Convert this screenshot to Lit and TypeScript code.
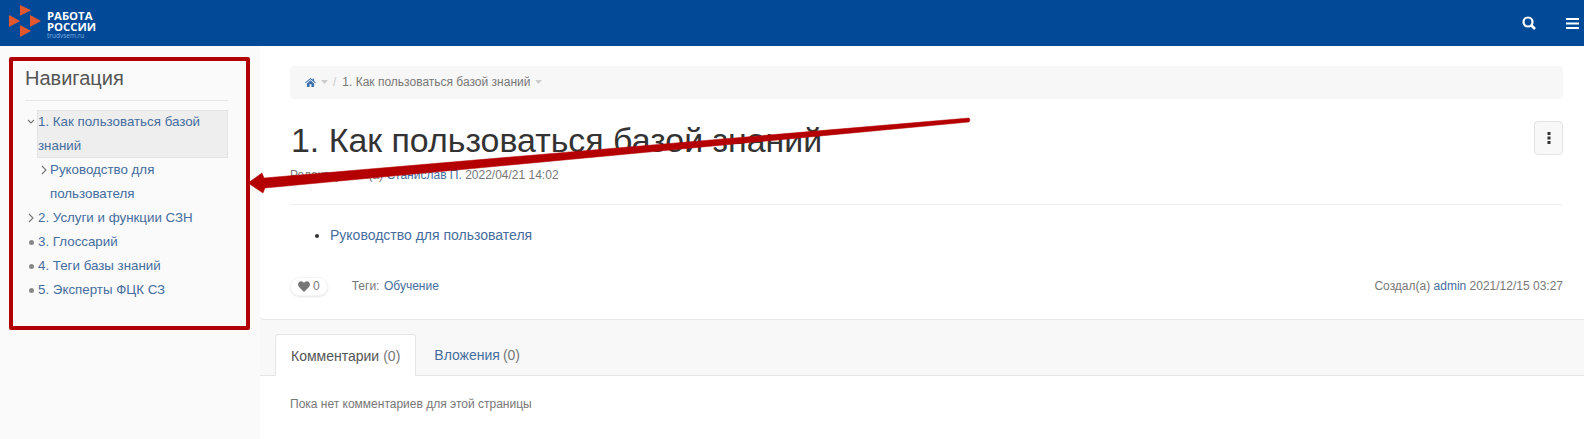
import { LitElement, html, css, svg } from "lit";
import { customElement } from "lit/decorators.js";

const chevRight = svg`<svg class="tw" width="6" height="10" viewBox="0 0 6 10"><path d="M1 1l4 4-4 4" fill="none" stroke="#777" stroke-width="1.1"/></svg>`;
const chevDown = svg`<svg class="tw" width="8" height="6" viewBox="0 0 8 6"><path d="M1 1l3 3 3-3" fill="none" stroke="#777" stroke-width="1.1"/></svg>`;
const caret = svg`<svg class="caret" width="7" height="4" viewBox="0 0 7 4"><path d="M0 0h7L3.500 4z" fill="#ccc"/></svg>`;

@customElement("app-root")
export class AppRoot extends LitElement {
  static styles = css`
    :host { display: block; width: 1584px; height: 439px; overflow: hidden; position: relative; background: #f8f8f8;
      font-family: "Liberation Sans", Arial, sans-serif; font-size: 12px; color: #777; }
    a { color: #456d9e; text-decoration: none; }
    .top { height: 46px; background: #024a98; display: flex; align-items: center; }
    .logo { display: flex; align-items: center; gap: 6px; }
    .logo-text { color: #fff; font-family: "Open Sans", sans-serif; font-weight: 700; font-size: 11.3px; line-height: 10.5px; padding-top: 4px; }
    .logo-text small { display: block; font-weight: 400; font-size: 6.5px; line-height: 7px; color: #7fb0e0; }
    .top-icons { margin-left: auto; display: flex; gap: 30px; align-items: center; padding-right: 5px; }
    .body { display: flex; height: 393px; }
    .side { width: 260px; flex: none; background: #fafafa; padding: 11px 0 0 9px; box-sizing: border-box; }
    .nav { width: 241px; height: 273px; box-sizing: border-box; border: 4px solid #b00000; border-radius: 2px; padding: 4px 18px 0 12px; }
    .nav h4 { margin: 0; font-size: 20px; font-weight: 400; line-height: 27px; color: #555; padding-bottom: 8px; border-bottom: 1px solid #e5e5e5; }
    .tree { margin-top: 9px; font-size: 13.33px; line-height: 24px; }
    .row { display: flex; position: relative; padding-left: 13px; }
    .row.sel-row { padding-left: 12px; }
    .row.sub { padding-left: 25px; }
    .mark { position: absolute; left: 3px; top: 0; height: 24px; display: flex; align-items: center; }
    .row.sel-row .mark { left: 2px; }
    .row.sub .mark { left: 16px; }
    .dot { width: 5px; height: 5px; border-radius: 50%; background: #888; margin-left: 1px; }
    .sel { background: #eee; box-shadow: inset 0 0 0 1px #e4e4e4; padding-left: 1px; flex: 1; }
    .main { flex: 1; min-width: 0; display: flex; flex-direction: column; }
    .card { height: 274px; background: #fff; border-bottom: 1px solid #e8e8e8; border-radius: 0 0 0 4px; padding: 20px 21px 0 30px; box-sizing: border-box; }
    .crumb { height: 33px; background: #f7f7f7; border-radius: 4px; display: flex; align-items: center; padding-left: 15px; padding-bottom: 1px; box-sizing: border-box; }
    .crumb .caret { margin-left: 5px; }
    .crumb .sep { color: #ccc; margin: 0 6px 0 5px; }
    .title-row { display: flex; justify-content: space-between; margin-top: 20px; }
    h1 { margin: 0; font-size: 33.9px; font-weight: 400; line-height: 42px; color: #333; padding-left: 1px; }
    .menu-btn { width: 29px; height: 34px; box-sizing: border-box; border: 1px solid #e3e3e3; border-radius: 4px; background: #f8f8f8; display: flex; align-items: center; justify-content: center; margin-top: 2px; }
    .meta { margin-top: 6px; line-height: 17px; height: 17px; }
    .card hr { border: 0; border-top: 1px solid #eee; margin: 20px 0 0; }
    .card ul { margin: 19px 0 0; padding-left: 40px; font-size: 14px; line-height: 22px; color: #333; }
    .foot { display: flex; align-items: center; margin-top: 30px; height: 20px; }
    .like { display: flex; align-items: center; gap: 3px; height: 19px; padding: 0 7px; border-radius: 10px; box-shadow: 0 1px 2px #e4e4e4; border: 1px solid #f4f4f4; box-sizing: border-box; }
    .tags { margin-left: 24px; display: flex; gap: 4.500px; }
    .created { margin-left: auto; }
    .tabs { height: 56px; padding: 14px 0 0 15px; box-sizing: border-box; display: flex; border-bottom: 1px solid #e5e5e5; font-size: 14px; }
    .tab { height: 41px; box-sizing: border-box; padding: 0 15px; display: flex; align-items: center; gap: 3px; }
    .tab.second { margin-left: 3px; }
    .tab.on { background: #fff; border: 1px solid #e5e5e5; border-bottom: 0; border-radius: 4px 4px 0 0; height: 42px; color: #555; gap: 4px; }
    .tab.on span { color: #777; }
    .comments { flex: 1; background: #fff; padding: 21px 30px; }
    .arrow { position: absolute; left: 0; top: 0; pointer-events: none; }
  `;
  render() {
    return html`
      <div class="top">
        <div class="logo">
          <svg width="41" height="46" viewBox="0 0 41 46"><g fill="#e4572e">
            <path d="M20 5L31 10.300L20 15.700z"/>
            <path d="M9 15L20 21L9 27z"/>
            <path d="M30 15L41 21L30 27z"/>
            <path d="M20 25L31 31L20 37z"/>
          </g></svg>
          <div class="logo-text">РАБОТА<br>РОССИИ<small>trudvsem.ru</small></div>
        </div>
        <div class="top-icons">
          <svg width="14" height="14" viewBox="0 0 14 14"><circle cx="6" cy="6" r="4.500" fill="none" stroke="#fff" stroke-width="2.200"/><path d="M9.500 9.500L13 13" stroke="#fff" stroke-width="2.600"/></svg>
          <svg width="13" height="11" viewBox="0 0 13 11"><path d="M0 1h13M0 5.500h13M0 10h13" stroke="#fff" stroke-width="2"/></svg>
        </div>
      </div>
      <div class="body">
        <div class="side">
          <div class="nav">
            <h4>Навигация</h4>
            <div class="tree">
              <div class="row sel-row"><span class="mark">${chevDown}</span><a class="sel">1. Как пользоваться базой знаний</a></div>
              <div class="row sub"><span class="mark">${chevRight}</span><a>Руководство для пользователя</a></div>
              <div class="row"><span class="mark">${chevRight}</span><a>2. Услуги и функции СЗН</a></div>
              <div class="row"><span class="mark"><i class="dot"></i></span><a>3. Глоссарий</a></div>
              <div class="row"><span class="mark"><i class="dot"></i></span><a>4. Теги базы знаний</a></div>
              <div class="row"><span class="mark"><i class="dot"></i></span><a>5. Эксперты ФЦК СЗ</a></div>
            </div>
          </div>
        </div>
        <div class="main">
          <div class="card">
            <div class="crumb">
              <svg width="11" height="9" viewBox="0 0 12 10"><path d="M6 0L0 5l.7.8L6 1.500l5.300 4.300L12 5l-2-1.700V.6H8.500v1.400zM2 6v4h3V7h2v3h3V6L6 2.600z" fill="#3f72af"/></svg>
              ${caret}<span class="sep">/</span><span>1. Как пользоваться базой знаний</span>${caret}
            </div>
            <div class="title-row">
              <h1>1. Как пользоваться базой знаний</h1>
              <div class="menu-btn"><svg width="4" height="12" viewBox="0 0 4 12"><path d="M.5 0h3v3h-3zM.5 4.500h3v3h-3zM.5 9h3v3h-3z" fill="#333"/></svg></div>
            </div>
            <div class="meta">Редактировал(а) <a>Станислав П.</a> 2022/04/21 14:02</div>
            <hr />
            <ul><li><a>Руководство для пользователя</a></li></ul>
            <div class="foot">
              <div class="like"><svg width="12" height="11" viewBox="0 0 12 11"><path d="M6 11L1 6C-1 3.500 .5 .3 3 .3 4.500 .3 5.500 1.200 6 2 6.500 1.200 7.500 .3 9 .3c2.500 0 4 3.200 2 5.700z" fill="#777"/></svg><span>0</span></div>
              <div class="tags"><span>Теги:</span><a>Обучение</a></div>
              <div class="created">Создал(а) <a>admin</a> 2021/12/15 03:27</div>
            </div>
          </div>
          <div class="tabs">
            <div class="tab on">Комментарии <span>(0)</span></div>
            <div class="tab second"><a>Вложения</a> <span>(0)</span></div>
          </div>
          <div class="comments">Пока нет комментариев для этой страницы</div>
        </div>
      </div>
      <svg class="arrow" width="1584" height="439" viewBox="0 0 1584 439">
        <path d="M248 183L262 173L264 178L969 118L970 120L969 122L265 188L263 193z" fill="#b40000" stroke="#b40000" stroke-width="0.5" stroke-linejoin="round"/>
      </svg>
    `;
  }
}
